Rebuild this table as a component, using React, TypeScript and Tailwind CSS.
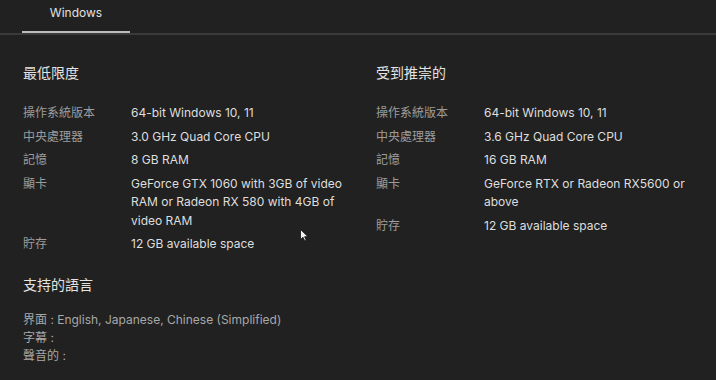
const MINIMUM = [
  { label: "操作系統版本", value: "64-bit Windows 10, 11" },
  { label: "中央處理器", value: "3.0 GHz Quad Core CPU" },
  { label: "記憶", value: "8 GB RAM" },
  { label: "顯卡", value: "GeForce GTX 1060 with 3GB of video RAM or Radeon RX 580 with 4GB of video RAM" },
  { label: "貯存", value: "12 GB available space" },
];

const RECOMMENDED = [
  { label: "操作系統版本", value: "64-bit Windows 10, 11" },
  { label: "中央處理器", value: "3.6 GHz Quad Core CPU" },
  { label: "記憶", value: "16 GB RAM" },
  { label: "顯卡", value: "GeForce RTX or Radeon RX5600 or above" },
  { label: "貯存", value: "12 GB available space" },
];

function SpecColumn({ title, rows }: { title: string; rows: { label: string; value: string }[] }) {
  return (
    <div className="w-[353px] shrink-0 flex flex-col">
      <h3 className="text-[14px] leading-[20px] text-[#e4e4e4]">{title}</h3>
      <div className="mt-[21px] flex flex-col gap-[5px]">
        {rows.map((row) => (
          <div key={row.label} className="flex text-[12px] leading-[18.5px]">
            <div className="w-[108px] shrink-0 text-[#9d9d9d]">{row.label}</div>
            <div className="w-[225px] text-[#dedede]">{row.value}</div>
          </div>
        ))}
      </div>
    </div>
  );
}

export default function App() {
  return (
    <div
      className="relative w-[716px] h-[380px] overflow-hidden bg-[#212121]"
      style={{ fontFamily: 'Inter, "Noto Sans CJK TC", sans-serif' }}
    >
      <div className="flex h-[33px]">
        <div className="ml-[22px] w-[108px] h-[33px] border-b-2 border-[#bdbdbd] flex justify-center pt-[4px] text-[12px] leading-[17px] text-[#e0e0e0]">
          Windows
        </div>
      </div>
      <div className="h-[2px] bg-[#3b3b3b]" />

      <div className="pl-[23px] pt-[28px]">
        <div className="flex">
          <SpecColumn title="最低限度" rows={MINIMUM} />
          <SpecColumn title="受到推崇的" rows={RECOMMENDED} />
        </div>

        <h3 className="mt-[21px] text-[14px] leading-[20px] text-[#e4e4e4]">支持的語言</h3>
        <div className="mt-[16px] flex flex-col text-[12px] leading-[18px] text-[#a8a8a8]">
          <div>界面 : English, Japanese, Chinese (Simplified)</div>
          <div>字幕 :</div>
          <div>聲音的 :</div>
        </div>
      </div>

      {/* mouse pointer from the capture */}
      <svg className="absolute left-[300px] top-[229px]" width="9" height="13" viewBox="0 0 9 13">
        <path d="M0.5 0.5 L0.5 10.5 L3 8.2 L4.8 12 L6.3 11.3 L4.6 7.7 L8 7.7 Z" fill="#f2f2f2" stroke="#111" strokeWidth="0.8" />
      </svg>
    </div>
  );
}
